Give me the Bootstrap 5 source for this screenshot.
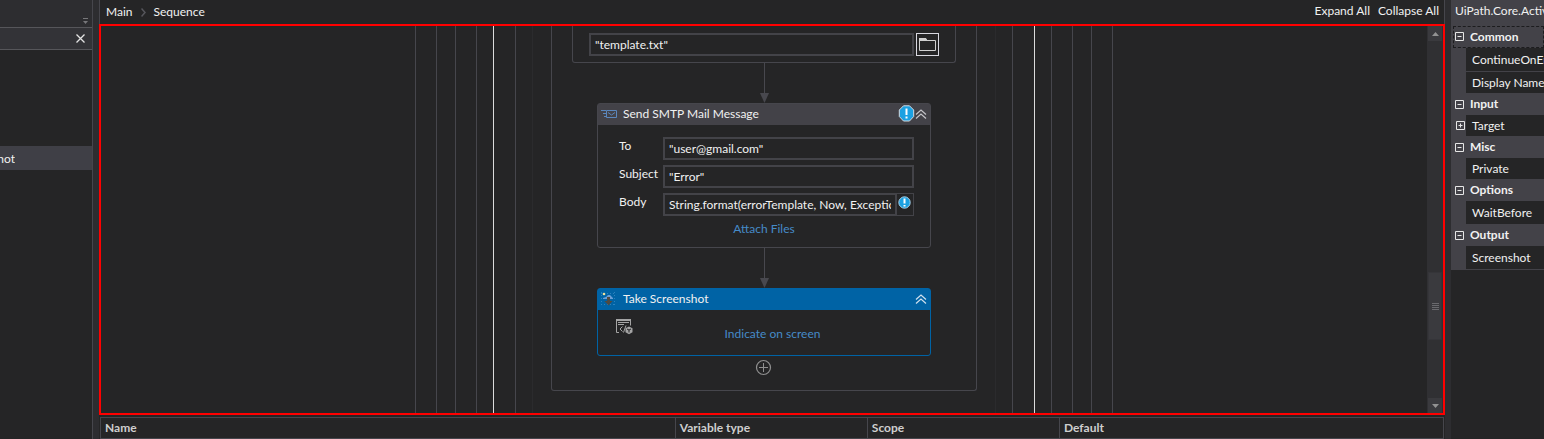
<!DOCTYPE html>
<html lang="en" data-bs-theme="dark">
<head>
<meta charset="utf-8">
<meta name="viewport" content="width=device-width, initial-scale=1">
<title>Workflow designer</title>
<link href="https://cdn.jsdelivr.net/npm/bootstrap@5.3.0/dist/css/bootstrap.min.css" rel="stylesheet">
<style>
  :root { --ink: #f1f1f1; --bg: #252526; --chrome: #2d2d30; --line: #46464c; --head: #434248; --blue: #0063a5; }
  body { font: 400 12px/16px Lato, "Open Sans", sans-serif; color: var(--ink); background: var(--chrome); }
  button, input { font: inherit; color: inherit; }
  button { background: none; border: 0; padding: 0; }
  svg { display: block; flex: none; }
  a { text-decoration: none; color: #468bc8; }

  /* left dock */
  .dock { width: 93px; border-right: 1px solid var(--line); background: var(--bg); }
  .dock-title { height: 28px; background: var(--chrome); border-bottom: 1px solid #56565a; padding: 0 4px 3px; }
  .dock-search { height: 22px; background: #333337; border-bottom: 1px solid #56565a; padding-right: 7px; }
  .dock-tree { padding-top: 96px; }
  .dock-item { height: 24px; background: #3f3f46; padding-top: 2px; }
  .dock-item span { width: 15px; }

  /* centre */
  .center { margin: 0 6px; background: var(--bg); }
  .crumbs { height: 24px; padding: 0 5px 0 6px; border: 1px solid var(--line); border-width: 0 1px; }
  .crumbs a { color: var(--ink); }
  .crumbs button { padding-bottom: 2px; }
  .designer { border: 2px solid #f00; }
  .nest { border: 1px solid var(--line); border-width: 0 1px; height: 100%; }
  .p16 { padding: 0 16px; } .p18 { padding: 0 18px; } .p20 { padding: 0 20px; } .p21 { padding: 0 21px; }
  .nest-hot { border-color: #dcdcdc; }
  .nest-faint { border-color: #2b2b2d; }
  .seq { width: 426px; border: 1px solid var(--line); border-top: 0; border-radius: 0 0 3px 3px; padding-bottom: 14px; }
  .act { border: 1px solid var(--line); border-radius: 3px; width: 334px; }
  .act-file { width: 384px; height: 37px; border-top: 0; border-radius: 0 0 3px 3px; padding: 7px 16px; gap: 2px; }
  .act-head { background: var(--head); height: 21px; padding: 0 3px 2px; gap: 5px; }
  .act-blue { border-color: var(--blue); }
  .act-blue .act-head { background: var(--blue); }
  .tbox { height: 23px; border: 2px solid #434348; background: transparent; padding: 0 4px; min-width: 0; outline: 0; border-radius: 0; }
  .pick { width: 23px; height: 23px; border: 1px solid #d8d8e0; }
  .form-rows { padding: 12px 16px 10px 21px; gap: 5px; }
  .form-rows label { width: 44px; line-height: 18px; }
  .warn { width: 17px; border: 1px solid #434348; border-left: 0; padding: 2px 0 0 1px; }
  .attach { padding-right: 5px; }
  .shot { height: 45px; padding: 9px 18px; }
  .shot a { padding-top: 7px; }
  .plus { margin-top: 3px; margin-right: 2px; }
  .sbar { width: 16px; background: #303033; padding: 0 1px; }
  .sbar button { height: 15px; background: #3a3a3e; }
  .thumb { height: 68px; background: #3a3a3e; border: 1px solid #353539; }
  .thumb-top { flex: 231 1 0; } .thumb-end { flex: 58 1 0; }

  /* variables */
  .vars { margin: 2px 0 0 1px; width: calc(100% - 2px); table-layout: fixed; color: #cfcfcf; border: 1px solid var(--line); }
  .vars th { height: 21px; padding: 1px 4px; font-weight: 700; border: 1px solid var(--line); border-top: 0; }

  /* properties */
  .props { width: 93px; background: var(--bg); overflow: hidden; white-space: nowrap; }
  .props-title { height: 26px; line-height: 22px; padding-left: 4px; background: var(--head); }
  .cat { background: var(--head); font-weight: 700; height: 21px; padding: 0 0 1px 4px; gap: 6px; }
  .cat-lead { height: 22px; outline: 1px dashed #1c1c1e; outline-offset: -1px; margin-left: 2px; padding-left: 2px; }
  .first-cat { background: var(--head); }
  .prop { border-left: 15px solid var(--head); border-bottom: 1px solid var(--head); height: 22px; padding-left: 6px; }
  .prop-tall { height: 24px; }
  .prop-open { border-left: 0; padding-left: 0; }
  .prop-open .twist { width: 15px; background: var(--head); padding-left: 5px; }
  .prop-open > span { padding-left: 6px; }
</style>
<script src="https://cdn.jsdelivr.net/npm/bootstrap@5.3.0/dist/js/bootstrap.bundle.min.js"></script>
</head>
<body class="vh-100 overflow-hidden d-flex">

<aside class="dock flex-shrink-0 d-flex flex-column">
  <div class="dock-title d-flex align-items-end justify-content-end">
    <button type="button" aria-label="Panel options"><svg width="5" height="6"><path d="M0 3h5L2.500 6z" fill="#77777a"/><path d="M0 .5h5" stroke="#77777a"/></svg></button>
  </div>
  <div class="dock-search d-flex align-items-center justify-content-end">
    <button type="button" aria-label="Clear search"><svg width="9" height="9"><path d="M.5.5l8 8M8.500.5l-8 8" stroke="#e4e4e4" stroke-width="1.300"/></svg></button>
  </div>
  <div class="dock-tree">
    <div class="dock-item d-flex align-items-center"><span class="d-flex justify-content-end overflow-hidden">hot</span></div>
  </div>
</aside>

<main class="center flex-fill d-flex flex-column overflow-hidden">
  <nav class="crumbs flex-shrink-0 d-flex align-items-center gap-2" aria-label="Breadcrumb">
    <a href="#">Main</a>
    <svg width="5" height="9"><path d="M.5.5l3.500 4-3.500 4" fill="none" stroke="#56565c" stroke-width="1.500"/></svg>
    <a href="#" class="me-auto">Sequence</a>
    <button type="button">Expand All</button>
    <button type="button">Collapse All</button>
  </nav>

  <section class="designer flex-fill d-flex overflow-hidden">
    <div class="flex-fill d-flex justify-content-center overflow-hidden">
      <div class="nest p20"><div class="nest p18"><div class="nest p20"><div class="nest p16">
      <div class="nest nest-hot p21"><div class="nest p16"><div class="nest nest-faint p18">
        <div class="seq d-flex flex-column align-items-center">
          <div class="act act-file d-flex">
            <input class="tbox flex-fill" type="text" aria-label="File name" value='"template.txt"'>
            <button type="button" class="pick d-flex align-items-center justify-content-center" aria-label="Browse">
              <svg width="17" height="13"><path d="M.5 12.500V.5h6l1.500 2h8.500v10z" fill="none" stroke="#d0d0d0"/><path d="M0 0h7l1 2v1H0z" fill="#d0d0d0"/></svg>
            </button>
          </div>
          <svg width="9" height="40"><path d="M4.500 0v31" stroke="#48484e"/><path d="M0 30h9L4.500 40z" fill="#48484e"/></svg>

          <div class="act">
            <div class="act-head d-flex align-items-center">
              <svg width="17" height="10"><g fill="none" stroke="#5b87bd"><path d="M0 1.500h5M2 4.500h3M3 7.500h2M5.500 1.500h10v7h-10zM7 3.500l3.500 2.500L14 3.500"/></g></svg>
              <span class="me-auto">Send SMTP Mail Message</span>
              <div class="d-flex align-items-center">
                <svg width="17" height="17" viewBox="0 0 17 17"><path d="M5.500.8h6l4.200 4.200v6.500l-4.200 4.500h-6L1.300 11.500V5z" fill="#1ba1e2" stroke="#d5dbe2"/><path d="M8.500 3.500v6.500M8.500 11.500v2" stroke="#fff" stroke-width="2"/></svg>
                <button type="button" aria-label="Collapse"><svg width="12" height="10"><path d="M1 5.500l5-4.500 5 4.500M1 9.500L6 5l5 4.500" fill="none" stroke="#c4c4c8" stroke-width="1.200"/></svg></button>
              </div>
            </div>
            <div class="form-rows d-flex flex-column">
              <div class="d-flex"><label for="to">To</label><input id="to" class="tbox flex-fill" type="text" value='"user@gmail.com"'></div>
              <div class="d-flex"><label for="subject">Subject</label><input id="subject" class="tbox flex-fill" type="text" value='"Error"'></div>
              <div class="d-flex"><label for="body">Body</label><input id="body" class="tbox flex-fill" type="text" value="String.format(errorTemplate, Now, Exception)">
                <div class="warn"><svg width="13" height="13" viewBox="0 0 13 13"><circle cx="6.500" cy="6.500" r="5.700" fill="#1ba1e2" stroke="#a9cfe6"/><path d="M6.500 2.500v5M6.500 9v1.500" stroke="#fff" stroke-width="2"/></svg></div>
              </div>
              <a href="#" class="attach align-self-center">Attach Files</a>
            </div>
          </div>
          <svg width="9" height="40"><path d="M4.500 0v31" stroke="#48484e"/><path d="M0 30h9L4.500 40z" fill="#48484e"/></svg>

          <div class="act act-blue">
            <div class="act-head d-flex align-items-center">
              <svg width="17" height="14" viewBox="0 0 17 14"><path d="M0 1.500h14M0 12.500h14M.5 0v14M13.500 0v14" stroke="#2b82bd" stroke-dasharray="1 2" fill="none"/><path d="M2 6l3-1 2-2h2l3 3v1H2z" fill="#6b9ed6"/><circle cx="3" cy="2" r="1.300" fill="#f2e29a"/><path d="M6 5h3v4h2.500l-4 4.500L3.500 9H6z" fill="#4d4b45"/></svg>
              <span class="me-auto">Take Screenshot</span>
              <button type="button" aria-label="Collapse"><svg width="12" height="10"><path d="M1 5.500l5-4.500 5 4.500M1 9.500L6 5l5 4.500" fill="none" stroke="#cfe0ee" stroke-width="1.200"/></svg></button>
            </div>
            <div class="shot d-flex align-items-start">
              <button type="button" aria-label="Target options"><svg width="17" height="16" viewBox="0 0 17 16"><path d="M0 0h15v2H0z" fill="#a4a4a4"/><g fill="none" stroke="#a4a4a4"><path d="M3 13.500H.5V.5h14v6M2 3.500h11M2 5.500h6"/><path d="M6.500 7.500L4 10l2.500 2.500M10 6.500L7.500 13.500"/></g><path d="M13 7.500l3.500 1.700v4L13 15.200l-3.500-2v-4z" fill="#a4a4a4"/><path d="M11 10l2 1 2-1M13 11v2.500" fill="none" stroke="#252526"/></svg></button>
              <a href="#" class="mx-auto">Indicate on screen</a>
            </div>
          </div>
          <button type="button" class="plus" aria-label="Add activity"><svg width="17" height="17"><circle cx="8.500" cy="8.500" r="7" fill="none" stroke="#8f8f8f" stroke-width="1.200"/><path d="M4 8.500h9M8.500 4v9" stroke="#8f8f8f"/></svg></button>
        </div>
      </div></div></div>
      </div></div></div></div>
    </div>
    <div class="sbar flex-shrink-0 d-flex flex-column">
      <button type="button" class="d-flex align-items-center justify-content-center" aria-label="Scroll up"><svg width="7" height="4"><path d="M0 4h7L3.500 0z" fill="#929292"/></svg></button>
      <div class="thumb-top"></div>
      <div class="thumb d-flex align-items-center justify-content-center"><svg width="7" height="7"><path d="M0 .5h7M0 2.500h7M0 4.500h7M0 6.500h7" stroke="#6a6a6e"/></svg></div>
      <div class="thumb-end"></div>
      <button type="button" class="d-flex align-items-center justify-content-center" aria-label="Scroll down"><svg width="7" height="4"><path d="M0 0h7L3.500 4z" fill="#929292"/></svg></button>
    </div>
  </section>

  <table class="vars flex-shrink-0">
    <colgroup><col style="width:42.800%"><col style="width:14.300%"><col style="width:14.300%"><col></colgroup>
    <thead><tr><th>Name</th><th>Variable type</th><th>Scope</th><th>Default</th></tr></thead>
  </table>
</main>

<aside class="props flex-shrink-0">
  <div class="props-title">UiPath.Core.Activities</div>
  <div class="first-cat"><div class="cat cat-lead d-flex align-items-center"><svg width="9" height="9"><path d="M.5.5h8v8h-8zM2.500 4.500h4" fill="none" stroke="#e6e6e6"/></svg>Common</div></div>
  <div class="prop prop-tall d-flex align-items-center">ContinueOnError</div>
  <div class="prop d-flex align-items-center">Display Name</div>
  <div class="cat d-flex align-items-center"><svg width="9" height="9"><path d="M.5.5h8v8h-8zM2.500 4.500h4" fill="none" stroke="#e6e6e6"/></svg>Input</div>
  <div class="prop prop-open d-flex align-items-center"><div class="twist h-100 d-flex align-items-center"><svg width="9" height="9"><path d="M.5.5h8v8h-8zM2.500 4.500h4M4.500 2.500v4" fill="none" stroke="#e6e6e6"/></svg></div><span>Target</span></div>
  <div class="cat d-flex align-items-center"><svg width="9" height="9"><path d="M.5.5h8v8h-8zM2.500 4.500h4" fill="none" stroke="#e6e6e6"/></svg>Misc</div>
  <div class="prop d-flex align-items-center">Private</div>
  <div class="cat d-flex align-items-center"><svg width="9" height="9"><path d="M.5.5h8v8h-8zM2.500 4.500h4" fill="none" stroke="#e6e6e6"/></svg>Options</div>
  <div class="prop prop-tall d-flex align-items-center">WaitBefore</div>
  <div class="cat d-flex align-items-center"><svg width="9" height="9"><path d="M.5.5h8v8h-8zM2.500 4.500h4" fill="none" stroke="#e6e6e6"/></svg>Output</div>
  <div class="prop prop-tall d-flex align-items-center">Screenshot</div>
</aside>
</body>
</html>
